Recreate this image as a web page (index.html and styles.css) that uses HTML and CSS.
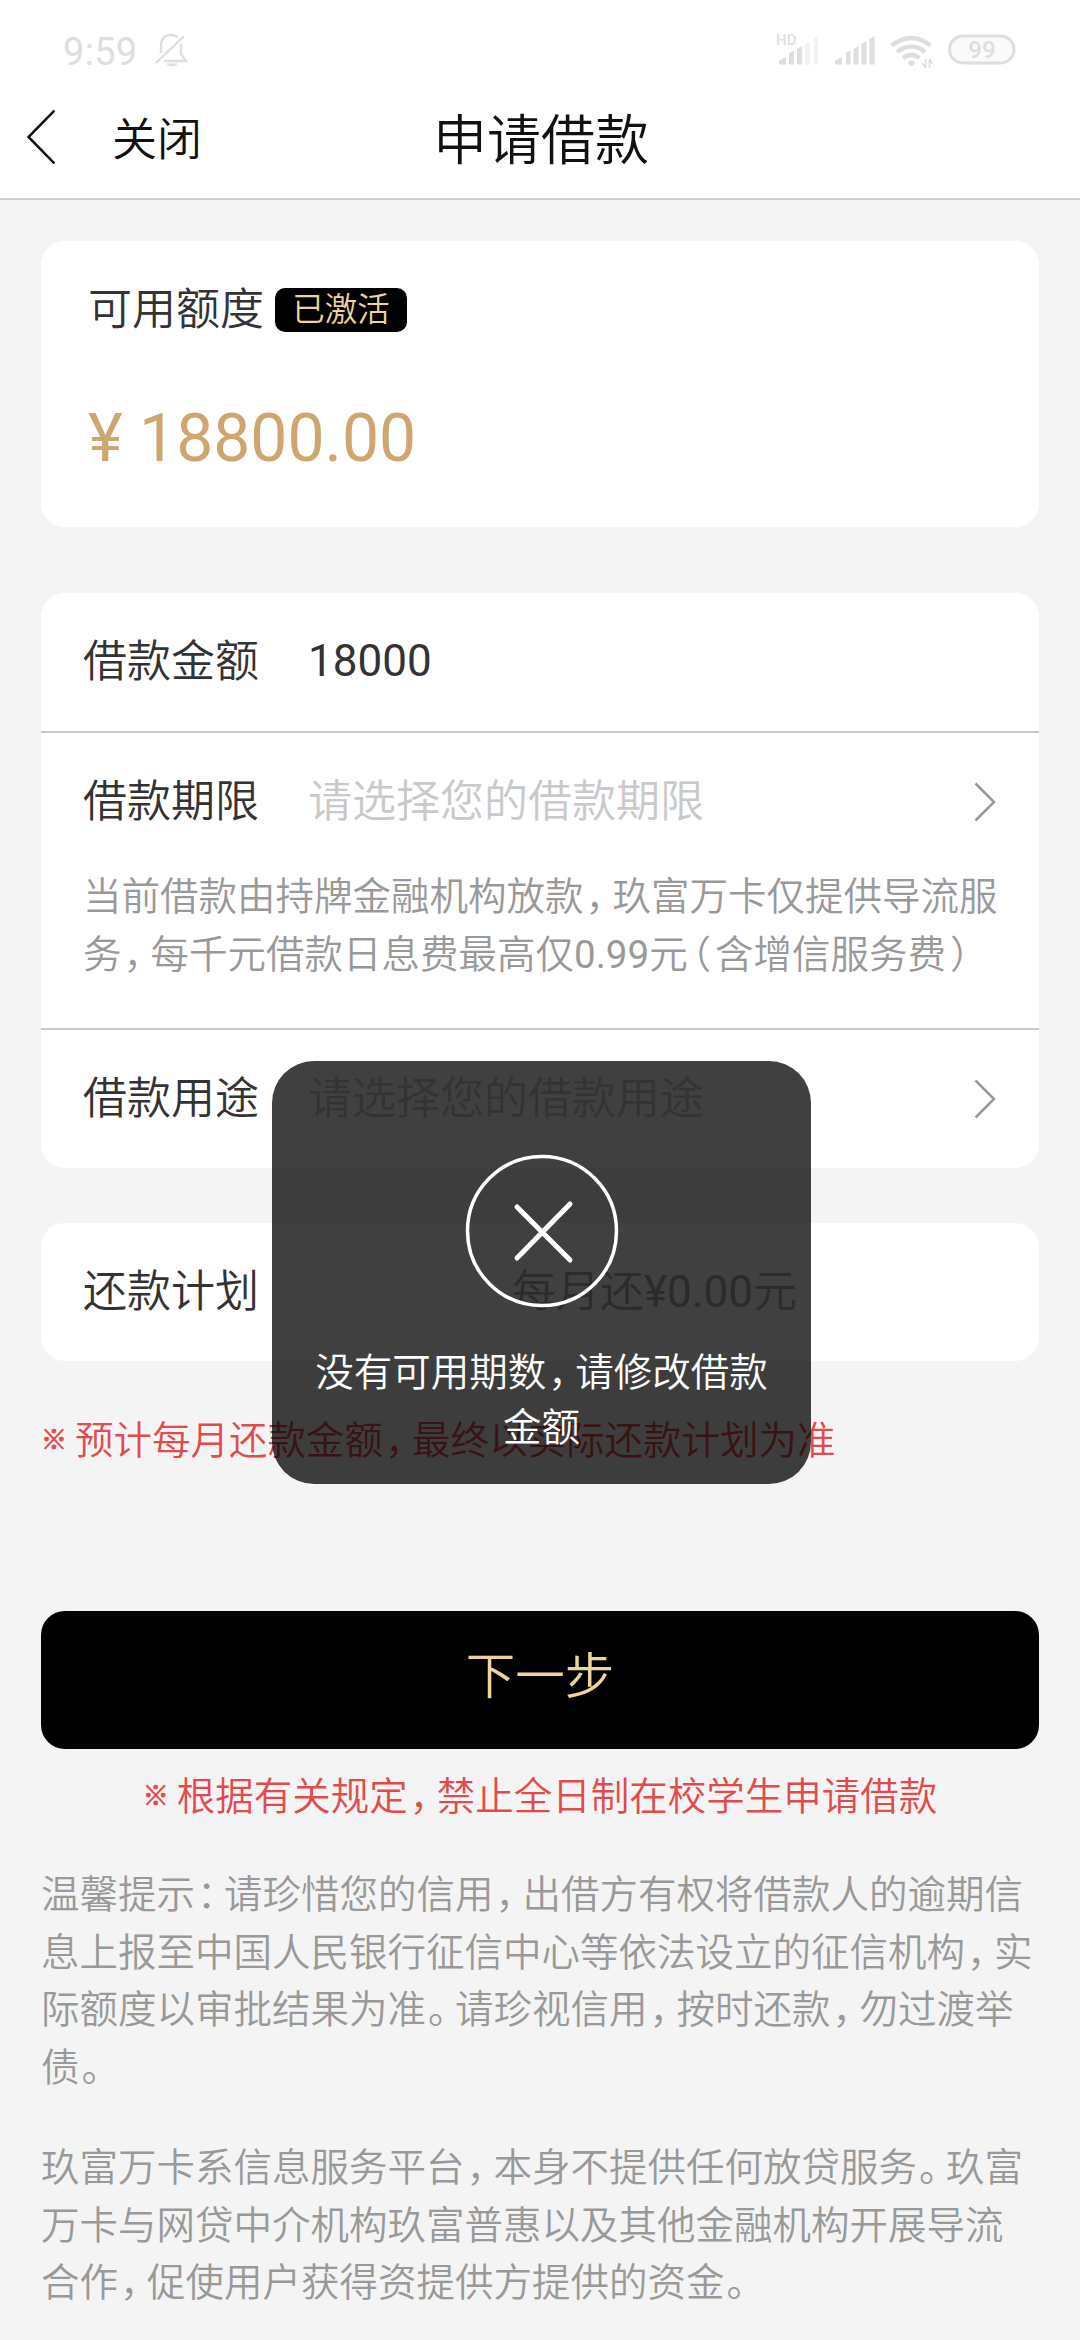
FILE: index.html
```html
<!DOCTYPE html>
<html lang="zh-CN">
<head>
<meta charset="utf-8">
<title>申请借款</title>
<link rel="stylesheet" href="styles.css">
</head>
<body>
<header class="top">
  <div class="status">
    <span class="clock">9:59</span>
    <svg class="bell" width="34" height="34" viewBox="0 0 34 34" fill="none" stroke="#dedede" stroke-width="2.4">
      <path d="M6 20V13C6 6 10 2 16 2c3 0 5 1 7 2M26 11v10l5 7H9M1 30L29 3"/><path d="M11 30.500h12c-2 3.500-10 3.500-12 0z" fill="#dedede" stroke="none"/>
    </svg>
    <svg class="signals" width="245" height="40" viewBox="0 0 245 40" fill="#dedede">
      <text class="hd" x="-1" y="14">HD</text>
      <path d="M2 33.500v-3.500l7-4v7.500zM12 33.500v-11l5-3v14zM20 33.500v-15.500l5-3v18.500z"/>
      <path opacity=".4" d="M28 33.500V13l5-3v23.500zM37 33.500V8l4-3v28.500z"/>
      <path d="M58 33.500v-3.500l7-4v7.500zM69 33.500V22l4.500-2.500v14zM76.500 33.500V18l5-3v18.500zM84.500 33.500V13l5-3v23.500zM92.500 33.500V8l5-3v28.500z"/>
      <g fill="none" stroke="#dedede" stroke-width="4.500"><path d="M114.500 14.500q20-15 39 0M120 21q14.500-11 28 0M126 27q8.500-6.500 16.500 0"/></g>
      <path d="M131 31q3.500-3 7 0q-1 4-3.500 4t-3.500-4z"/>
      <path d="M148.500 28v9M148.500 37l-3-5M152.500 37v-9M152.500 28l3 5" fill="none" stroke="#dedede" stroke-width="1.500"/>
      <rect x="172.500" y="5" width="64.500" height="27" rx="13.500" fill="#fafafa" stroke="#dedede" stroke-width="3"/>
      <text class="batt" x="205" y="27" text-anchor="middle">99</text>
    </svg>
  </div>
  <div class="nav">
    <svg class="back" width="28" height="54" viewBox="0 0 28 54" fill="none" stroke="#111" stroke-width="2.500"><path d="M27.500 .5L1.500 27l26 26.500"/></svg>
    <span class="close">关闭</span>
    <h1 class="title">申请借款</h1>
  </div>
</header>
<main class="page">
  <section class="card quota">
    <div class="quota-head"><span class="label">可用额度</span><span class="badge">已激活</span></div>
    <div class="amount">¥ 18800.00</div>
  </section>
  <section class="card form">
    <div class="row"><span class="label">借款金额</span><span class="value">18000</span></div>
    <div class="term">
      <div class="row row-term"><span class="label">借款期限</span><span class="hint">请选择您的借款期限</span>
        <svg class="chev" width="22" height="40" viewBox="0 0 22 40" fill="none" stroke="#999" stroke-width="2.500"><path d="M1.500 1.500L20 20 1.500 38.500"/></svg></div>
      <p class="note">当前借款由持牌金融机构放款<i>，</i>玖富万卡仅提供导流服<br>务<i>，</i>每千元借款日息费最高仅<span class="num">0.99</span>元<b class="paren">（</b>含增信服务费<b class="paren">）</b></p>
    </div>
    <div class="row"><span class="label">借款用途</span><span class="hint">请选择您的借款用途</span>
      <svg class="chev" width="22" height="40" viewBox="0 0 22 40" fill="none" stroke="#999" stroke-width="2.500"><path d="M1.500 1.500L20 20 1.500 38.500"/></svg></div>
  </section>
  <section class="card plan">
    <div class="row"><span class="label">还款计划</span><span class="monthly">每月还<span class="num">¥0.00</span>元</span></div>
  </section>
  <p class="warn"><b class="mark">※</b>预计每月还款金额<i>，</i>最终以实际还款计划为准</p>
  <button class="next">下一步</button>
  <p class="warn warn-center"><b class="mark">※</b>根据有关规定<i>，</i>禁止全日制在校学生申请借款</p>
  <p class="tips">温馨提示<i>：</i>请珍惜您的信用<i>，</i>出借方有权将借款人的逾期信<br>息上报至中国人民银行征信中心等依法设立的征信机构<i>，</i>实<br>际额度以审批结果为准<i>。</i>请珍视信用<i>，</i>按时还款<i>，</i>勿过渡举<br>债<i>。</i></p>
  <p class="tips">玖富万卡系信息服务平台<i>，</i>本身不提供任何放贷服务<i>。</i>玖富<br>万卡与网贷中介机构玖富普惠以及其他金融机构开展导流<br>合作<i>，</i>促使用户获得资提供方提供的资金<i>。</i></p>
</main>
<div class="toast">
  <svg width="156" height="156" viewBox="0 0 156 156" fill="none" stroke="#fff" stroke-linecap="round"><circle cx="78" cy="78" r="74.500" stroke-width="3.500"/><path d="M53 54l53 53M106 51L53 105" stroke-width="5"/></svg>
  <p class="toast-text">没有可用期数<i>，</i>请修改借款<br>金额</p>
</div>
</body>
</html>
```

FILE: styles.css
```css
* { box-sizing: border-box; }
body {
  margin: 0;
  position: relative;
  width: 1080px;
  height: 2340px;
  overflow: hidden;
  background: #f4f4f4;
  color: #333;
  font-family: Roboto, "Noto Sans CJK SC", sans-serif;
  font-weight: 350;
  white-space: nowrap;
}
p, h1 { margin: 0; font-weight: inherit; }
i { font-style: normal; padding-left: 2px; letter-spacing: -11.500px; }
.num { font-weight: 400; }
.top { height: 200px; background: #fff; border-bottom: 2px solid #cfcfcf; }
.status { display: flex; height: 80px; padding: 30px 0 0 63px; color: #dedede; }
.clock { flex: none; font-size: 38px; line-height: 44px; font-weight: 400; width: 92px; letter-spacing: .3px; }
.bell { flex: none; margin-top: 3px; }
.signals { margin: 1px 0 0 588px; overflow: visible; flex: none; }
.hd { font: 500 15px Roboto, sans-serif; }
.batt { font: 500 24px Roboto, sans-serif; }
.nav { display: grid; grid-template-columns: 85px 321px auto; align-items: center; height: 114px; padding: 0 0 0 27px; color: #111; }
.close { font-size: 45px; margin-top: -2px; }
.title { font-size: 54px; margin-top: -2px; }
.page { padding: 41px 41px 0; }
.card { background: #fff; border-radius: 24px; }
.label { font-size: 44px; line-height: 50px; position: relative; left: -1px; }
.quota { height: 286px; padding: 44px 47px 0 48px; }
.quota-head { display: flex; align-items: center; gap: 10px; height: 50px; }
.badge { width: 132px; height: 44px; border-radius: 10px; background: #000; color: #ecd49b; font-size: 32.500px; line-height: 44px; text-align: center; }
.amount { margin-top: 65px; margin-left: -1px; font-size: 66px; line-height: 78px; font-weight: 400; color: #cda76f; }
.form { margin-top: 66px; }
.row { display: flex; align-items: center; height: 138px; padding: 0 43px; font-size: 44px; line-height: 50px; }
.value { margin-left: 48px; font-weight: 400; position: relative; top: -1px; }
.hint { margin-left: 48px; color: #c9c9c9; }
.chev { margin-left: auto; }
.term { height: 299px; border: solid #c9c9c9; border-width: 2px 0; }
.row-term { height: 138px; }
.note { margin-top: -3px; padding-left: 42px; font-size: 38.500px; line-height: 57.500px; color: #999; }
.paren { font-weight: inherit; font-feature-settings: "halt"; padding: 0 4px; }
.plan { margin-top: 55px; }
.monthly { margin-left: 252px; color: #aaa; }
.warn { display: flex; align-items: center; margin-top: 48px; height: 56px; font-size: 38.500px; color: #e14b4b; }
.mark { width: 34px; font-size: 26px; font-weight: 700; -webkit-text-stroke: .8px; }
.next { display: block; width: 100%; height: 138px; margin-top: 146px; padding: 0 0 15px; border: 0; border-radius: 24px; background: #000; color: #ecd49b; font: inherit; font-size: 49.500px; }
.warn-center { margin-top: 16px; justify-content: center; }
.tips { margin-top: 45px; font-size: 38.500px; line-height: 57.700px; color: #999; }
.tips + .tips { margin-top: 42px; }
.toast { position: absolute; left: 272px; top: 1061px; width: 539px; height: 423px; border-radius: 42px; background: rgba(0, 0, 0, .75); color: #fff; display: flex; flex-direction: column; align-items: center; padding-top: 92px; }
.toast-text { margin-top: 36px; font-size: 38.500px; line-height: 55px; text-align: center; }
```
